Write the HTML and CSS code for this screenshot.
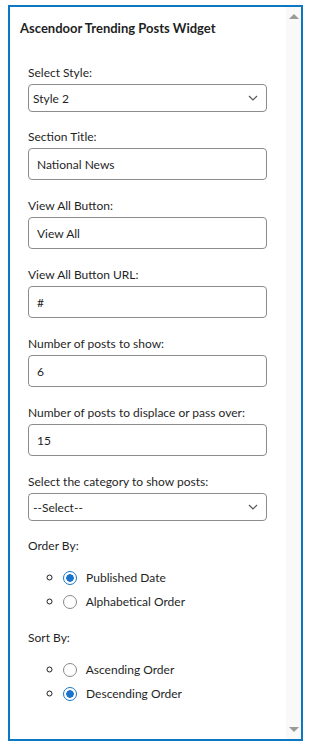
FILE: index.html
```html
<!DOCTYPE html>
<html lang="en">
<head>
  <meta charset="UTF-8">
  <meta name="viewport" content="width=device-width, initial-scale=1.0">
  <title>Ascendoor Trending Posts Widget</title>
  <link rel="stylesheet" href="styles.css">
</head>
<body>
  <div class="widget">
    <div class="widget-body">
      <h3 class="widget-title">Ascendoor Trending Posts Widget</h3>

      <div class="form">
        <div class="field select-field">
          <label>Select Style:</label>
          <div class="select">
            <span>Style 2</span>
            <svg class="chevron" width="10" height="6" viewBox="0 0 10 6"><path d="M1 1 L5 5 L9 1" fill="none" stroke="#555" stroke-width="1.2"/></svg>
          </div>
        </div>

        <div class="field">
          <label>Section Title:</label>
          <input type="text" value="National News">
        </div>

        <div class="field">
          <label>View All Button:</label>
          <input type="text" value="View All">
        </div>

        <div class="field">
          <label>View All Button URL:</label>
          <input type="text" value="#">
        </div>

        <div class="field">
          <label>Number of posts to show:</label>
          <input type="text" value="6">
        </div>

        <div class="field">
          <label>Number of posts to displace or pass over:</label>
          <input type="text" value="15">
        </div>

        <div class="field select-field">
          <label>Select the category to show posts:</label>
          <div class="select">
            <span>--Select--</span>
            <svg class="chevron" width="10" height="6" viewBox="0 0 10 6"><path d="M1 1 L5 5 L9 1" fill="none" stroke="#555" stroke-width="1.2"/></svg>
          </div>
        </div>

        <div class="group">
          <label>Order By:</label>
          <ul class="radios">
            <li><input type="radio" name="order" checked> Published Date</li>
            <li><input type="radio" name="order"> Alphabetical Order</li>
          </ul>
        </div>

        <div class="group">
          <label>Sort By:</label>
          <ul class="radios">
            <li><input type="radio" name="sort"> Ascending Order</li>
            <li><input type="radio" name="sort" checked> Descending Order</li>
          </ul>
        </div>
      </div>
    </div>

    <div class="scrollbar">
      <span class="arrow up"></span>
      <span class="arrow down"></span>
    </div>
  </div>
</body>
</html>
```

FILE: styles.css
```css
body {
  margin: 0;
  font-family: Lato, 'Open Sans', sans-serif;
  color: #1f1f1f;
  background: #fff;
}

.widget {
  display: flex;
  margin: 5px 0 0 8px;
  width: 291px;
  height: 732px;
  border: 2px solid #0b78c3;
}

.widget-body {
  flex: 1;
  padding: 13px 0 0 10px;
}

.widget-title {
  margin: 0;
  font-size: 13px;
  font-weight: 700;
  line-height: 17px;
}

.form {
  padding: 28px 0 0 8px;
}

.field {
  display: flex;
  flex-direction: column;
  margin-bottom: 18px;
}

.select-field {
  margin-bottom: 17px;
}

label {
  font-size: 12px;
  line-height: 16px;
  margin-bottom: 3px;
}

input[type="text"] {
  box-sizing: border-box;
  width: 239px;
  height: 32px;
  padding: 0 8px;
  font-family: inherit;
  font-size: 12px;
  color: #1f1f1f;
  border: 1px solid #8c8c8c;
  border-radius: 4px;
  outline: none;
}

.select {
  box-sizing: border-box;
  display: flex;
  align-items: center;
  justify-content: space-between;
  width: 239px;
  height: 28px;
  padding: 0 8px 0 4px;
  font-size: 12px;
  border: 1px solid #8c8c8c;
  border-radius: 4px;
}

.group label {
  display: block;
}

.radios {
  list-style: circle;
  margin: 11px 0 17px;
  padding-left: 35px;
  font-size: 12px;
}

.radios li {
  display: list-item;
  height: 24px;
  line-height: 24px;
}

.radios li::marker {
  font-size: 14px;
}

input[type="radio"] {
  appearance: none;
  box-sizing: border-box;
  width: 14px;
  height: 14px;
  margin: 0 6px 0 0;
  vertical-align: -3px;
  border: 1px solid #8a8a8a;
  border-radius: 50%;
  background: #fff;
}

input[type="radio"]:checked {
  border-color: #1a73c8;
  background: radial-gradient(circle, #1a73c8 0 3.5px, #fff 4px);
}

.scrollbar {
  position: relative;
  width: 15px;
  background: #f9f9f9;
}

.arrow {
  position: absolute;
  left: 3px;
  width: 0;
  height: 0;
  border-left: 5px solid transparent;
  border-right: 5px solid transparent;
}

.arrow.up {
  top: 7px;
  border-bottom: 5px solid #9a9a9a;
}

.arrow.down {
  bottom: 7px;
  border-top: 5px solid #9a9a9a;
}
```
